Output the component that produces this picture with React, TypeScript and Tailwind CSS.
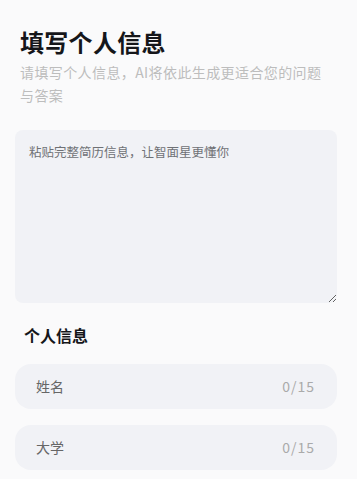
import React, { useState } from 'react';

const font = { fontFamily: '"Noto Sans CJK SC", "Noto Sans", sans-serif' };

function CountInput({ placeholder, max }: { placeholder: string; max: number }) {
  const [value, setValue] = useState('');
  return (
    <div className="h-[45px] rounded-[16px] bg-[#f1f2f6] flex items-center pl-[21px] pr-[22px]">
      <input
        value={value}
        maxLength={max}
        onChange={(e) => setValue(e.target.value)}
        placeholder={placeholder}
        className="flex-1 min-w-0 bg-transparent outline-none text-[14px] text-[#333] placeholder:text-[#666]"
      />
      <span className="text-[14px] text-[#aaaaaa] tracking-[1px]">
        {value.length}/{max}
      </span>
    </div>
  );
}

export default function App() {
  const [resume, setResume] = useState('');

  return (
    <div className="min-h-screen bg-[#fafafb] pt-[26px] pb-4 pl-[15px] pr-5" style={font}>
      <div className="pl-[5px]">
        <h1 className="text-[24px] leading-[32px] font-bold text-[#15161a] tracking-[0.3px]">填写个人信息</h1>
        <p className="mt-[3px] pr-[12px] text-[14px] leading-[23px] text-[#bdbdbd] tracking-[0.4px]">
          请填写个人信息，AI将依此生成更适合您的问题与答案
        </p>
      </div>

      <textarea
        value={resume}
        onChange={(e) => setResume(e.target.value)}
        placeholder="粘贴完整简历信息，让智面星更懂你"
        className="mt-[23px] block w-full h-[173px] rounded-[8px] bg-[#f1f2f6] px-[14px] pt-[12px] text-[12.5px] leading-[20px] text-[#333] placeholder:text-[#6f7175] outline-none"
      />

      <h2 className="mt-[20px] pl-[9px] text-[16px] leading-[24px] font-bold text-[#15161a]">个人信息</h2>

      <div className="mt-[17px] flex flex-col gap-4">
        <CountInput placeholder="姓名" max={15} />
        <CountInput placeholder="大学" max={15} />
      </div>
    </div>
  );
}
